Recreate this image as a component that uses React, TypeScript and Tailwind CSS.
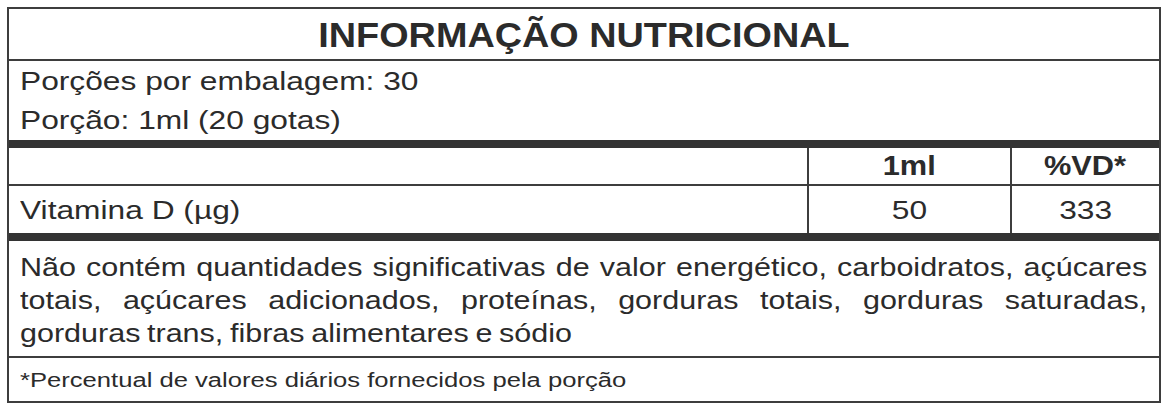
import React from "react";

const font = { fontFamily: '"Liberation Sans", Arial, sans-serif' };

function Stretch({ children, s, className = "" }: { children: React.ReactNode; s: string; className?: string }) {
  return <span className={`inline-block origin-left whitespace-nowrap ${s} ${className}`}>{children}</span>;
}

export default function App() {
  return (
    <div className="w-[1169px] h-[410px] bg-white text-[#2b2b2b]" style={font}>
      <div className="absolute left-[7px] top-[7px] w-[1154px] h-[396px] border-2 border-[#3d3d3d] flex flex-col">
        {/* Title */}
        <div className="h-[52px] border-b-2 border-[#3d3d3d] flex items-center justify-center">
          <span className="text-[35px] font-bold leading-none inline-block scale-x-[1.08]">INFORMAÇÃO NUTRICIONAL</span>
        </div>
        {/* Portions */}
        <div className="h-[79px] flex flex-col justify-center pl-[11px]">
          <div className="h-[40px] flex items-center">
            <Stretch s="scale-x-[1.22]" className="text-[26px] leading-none">Porções por embalagem: 30</Stretch>
          </div>
          <div className="h-[40px] flex items-center">
            <Stretch s="scale-x-[1.22]" className="text-[26px] leading-none">Porção: 1ml (20 gotas)</Stretch>
          </div>
        </div>
        <div className="h-[8px] bg-[#333333]" />
        {/* Header row */}
        <div className="h-[38px] flex border-b-2 border-[#3d3d3d]">
          <div className="w-[800px] border-r-2 border-[#3d3d3d]" />
          <div className="w-[203px] border-r-2 border-[#3d3d3d] flex items-center justify-center">
            <span className="text-[27px] font-bold leading-none inline-block scale-x-[1.14]">1ml</span>
          </div>
          <div className="flex-1 flex items-center justify-center">
            <span className="text-[27px] font-bold leading-none inline-block scale-x-[1.14]">%VD*</span>
          </div>
        </div>
        {/* Vitamin row */}
        <div className="h-[47px] flex">
          <div className="w-[800px] border-r-2 border-[#3d3d3d] flex items-center pl-[11px]">
            <Stretch s="scale-x-[1.22]" className="text-[26px] leading-none">Vitamina D (µg)</Stretch>
          </div>
          <div className="w-[203px] border-r-2 border-[#3d3d3d] flex items-center justify-center">
            <span className="text-[26px] leading-none inline-block scale-x-[1.22]">50</span>
          </div>
          <div className="flex-1 flex items-center justify-center">
            <span className="text-[26px] leading-none inline-block scale-x-[1.22]">333</span>
          </div>
        </div>
        <div className="h-[8px] bg-[#333333]" />
        {/* Paragraph */}
        <div className="h-[117px] border-b-2 border-[#3d3d3d] pl-[11px] pt-[10px] overflow-hidden">
          <div className="w-[924px] origin-top-left scale-x-[1.22] text-[25px] leading-[33px]">
            <div className="text-justify [text-align-last:justify]">
              Não contém quantidades significativas de valor energético, carboidratos, açúcares
            </div>
            <div className="text-justify [text-align-last:justify]">
              totais, açúcares adicionados, proteínas, gorduras totais, gorduras saturadas,
            </div>
            <div className="[word-spacing:-1.5px]">gorduras trans, fibras alimentares e sódio</div>
          </div>
        </div>
        {/* Footnote */}
        <div className="flex-1 flex items-center pl-[11px]">
          <Stretch s="scale-x-[1.28]" className="text-[20px] leading-none">*Percentual de valores diários fornecidos pela porção</Stretch>
        </div>
      </div>
    </div>
  );
}
